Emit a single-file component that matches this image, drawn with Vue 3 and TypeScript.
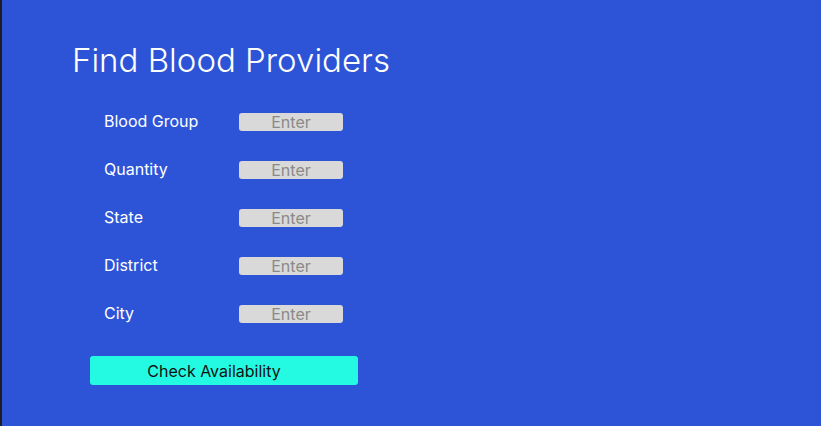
<script setup lang="ts">
import { reactive } from 'vue'

interface Field {
  id: string
  label: string
}

const fields: Field[] = [
  { id: 'bloodGroup', label: 'Blood Group' },
  { id: 'quantity', label: 'Quantity' },
  { id: 'state', label: 'State' },
  { id: 'district', label: 'District' },
  { id: 'city', label: 'City' },
]

const values = reactive<Record<string, string>>({})
</script>

<template>
  <main class="page">
    <h1 class="title">Find Blood Providers</h1>
    <form class="form" @submit.prevent>
      <div v-for="field in fields" :key="field.id" class="row">
        <label class="label" :for="field.id">{{ field.label }}</label>
        <input :id="field.id" v-model="values[field.id]" class="input" type="text" placeholder="Enter" />
      </div>
      <button class="submit" type="submit">Check Availability</button>
    </form>
  </main>
</template>

<style>
body {
  background: #2d54d6;
}
</style>

<style scoped>
.page {
  box-sizing: border-box;
  min-height: 100vh;
  padding: 40px 70px;
  border-left: 2px solid #1e1e1e;
  background: #2d54d6;
  color: #fff;
  font-family: Inter, sans-serif;
}

.title {
  margin: 0;
  font-size: 33px;
  font-weight: 300;
  line-height: 40px;
}

.form {
  display: flex;
  flex-direction: column;
  gap: 28px;
  width: 268px;
  margin: 32px 0 0 18px;
}

.row {
  display: grid;
  grid-template-columns: 135px 104px;
  align-items: center;
  height: 20px;
  padding-left: 14px;
}

.label {
  align-self: start;
  font-size: 16px;
  line-height: 18px;
}

.input {
  box-sizing: border-box;
  width: 100%;
  height: 18px;
  padding: 0;
  border: 0;
  border-radius: 3px;
  background: #d9d9d9;
  color: #222;
  font: 16px/18px Inter, sans-serif;
  text-align: center;
}

.input::placeholder {
  color: #8a8a8a;
  opacity: 1;
}

.submit {
  height: 29px;
  margin-top: 4px;
  padding: 0 20px 0 0;
  border: 0;
  border-radius: 3px;
  background: #24fae1;
  color: #111;
  font: 16px/20px Inter, sans-serif;
}
</style>
